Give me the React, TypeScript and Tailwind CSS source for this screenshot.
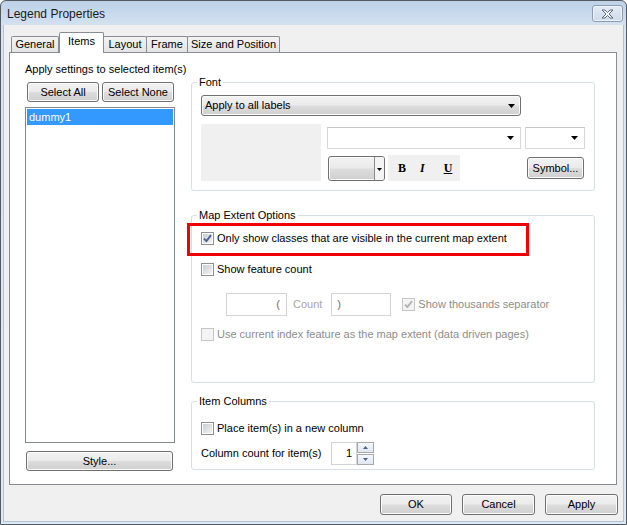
import type { ReactNode } from "react";

const btnBg =
  "bg-[linear-gradient(#f2f2f2_0%,#ebebeb_48%,#dddddd_52%,#cfcfcf_100%)] shadow-[inset_0_0_0_1px_#fbfbfb]";

function Button({ label, className }: { label: string; className: string }) {
  return (
    <div
      className={`flex shrink-0 items-center justify-center rounded-[3px] border border-[#707070] text-[11px] leading-[13px] text-black ${btnBg} ${className}`}
    >
      {label}
    </div>
  );
}

function Arrow({ color = "#000" }: { color?: string }) {
  return (
    <svg width="7" height="4" viewBox="0 0 7 4">
      <path d="M0 0 H7 L3.5 4 Z" fill={color} />
    </svg>
  );
}

function Check({ checked, disabled }: { checked?: boolean; disabled?: boolean }) {
  return (
    <span
      className={`flex h-[13px] w-[13px] shrink-0 items-center justify-center border ${
        disabled ? "border-[#c6c6c6] bg-[#f4f4f4]" : "border-[#8e8f8f] bg-white"
      }`}
    >
      <span
        className={`flex h-[9px] w-[9px] items-center justify-center ${
          disabled ? "bg-[#f4f4f4]" : "bg-[linear-gradient(135deg,#c9ccd1,#f3f3f3)]"
        }`}
      >
        {checked ? (
          <svg width="9" height="9" viewBox="0 0 9 9">
            <path
              d="M1 4.6 L3.4 7 L8 1.2"
              fill="none"
              stroke={disabled ? "#b3b3b3" : "#4a5f97"}
              strokeWidth="1.9"
            />
          </svg>
        ) : null}
      </span>
    </span>
  );
}

function Group({ title, className, children }: { title: string; className: string; children: ReactNode }) {
  return (
    <div className={`relative w-[404px] shrink-0 rounded-[3px] border border-[#d5dfe5] pl-[9px] ${className}`}>
      <span className="absolute -top-[7px] left-[5px] bg-white px-[2px] text-[11px] leading-[13px]">{title}</span>
      {children}
    </div>
  );
}

function Tab({ label, className }: { label: string; className: string }) {
  return (
    <div
      className={`flex shrink-0 items-center justify-center rounded-t-[2px] border border-b-0 border-[#898c95] text-[11px] leading-[13px] ${className}`}
    >
      {label}
    </div>
  );
}

export default function App() {
  return (
    <div className="h-[525px] w-[627px] bg-white font-['Liberation_Sans',Arial,sans-serif] text-black">
      <div className="flex h-[525px] w-[627px] flex-col overflow-hidden rounded-t-[6px] border border-[#555a60] bg-[linear-gradient(#bdd1e8,#d9e5f3_30px,#dde8f5)]">
        {/* title bar */}
        <div className="flex h-[24px] shrink-0 items-start justify-between pl-[6px] pr-[3px]">
          <span className="mt-[6px] text-[12px] leading-[14px] text-[#1b1b1b]">Legend Properties</span>
          <div className="mt-[4px] flex h-[17px] w-[31px] items-center justify-center rounded-[3px] border border-[#8c9db3] bg-[linear-gradient(#e3ebf5,#cfdbea)] shadow-[inset_0_0_0_1px_#eef3f9]">
            <svg width="13" height="10" viewBox="0 0 13 10">
              <path
                d="M1 1 H4 L6.5 3.5 L9 1 H12 L8 5 L12 9 H9 L6.5 6.5 L4 9 H1 L5 5 Z"
                fill="#f6f8fb"
                stroke="#4d5b6e"
                strokeWidth="0.9"
                strokeLinejoin="round"
              />
            </svg>
          </div>
        </div>

        {/* client area */}
        <div className="mx-[2px] mb-[2px] flex flex-1 flex-col border-x border-b border-[#b4c2d3] bg-[#f0f0f0] pl-[5px] pt-[7px]">
          {/* tabs */}
          <div className="relative z-10 flex h-[20px] items-end pl-[2px]">
            <Tab label="General" className="h-[16px] w-[48px] bg-[linear-gradient(#f3f3f3,#e4e4e4)]" />
            <Tab label="Items" className="-mb-[1px] h-[21px] w-[45px] bg-white pb-[3px]" />
            <Tab label="Layout" className="-ml-[1px] h-[16px] w-[44px] bg-[linear-gradient(#f3f3f3,#e4e4e4)]" />
            <Tab label="Frame" className="-ml-[1px] h-[16px] w-[42px] bg-[linear-gradient(#f3f3f3,#e4e4e4)]" />
            <Tab
              label="Size and Position"
              className="-ml-[1px] h-[16px] w-[93px] bg-[linear-gradient(#f3f3f3,#e4e4e4)]"
            />
          </div>

          {/* panel */}
          <div className="flex h-[433px] w-[608px] border border-[#898c95] bg-white pl-[15px] pt-[10px] text-[11px] leading-[13px]">
            {/* left column */}
            <div className="flex w-[150px] shrink-0 flex-col">
              <div className="h-[13px] whitespace-nowrap">Apply settings to selected item(s)</div>
              <div className="ml-[2px] mt-[6px] flex gap-[3px]">
                <Button label="Select All" className="h-[20px] w-[72px]" />
                <Button label="Select None" className="h-[20px] w-[72px]" />
              </div>
              <div className="mt-[5px] h-[336px] w-[150px] border border-[#828790] bg-white p-[1px]">
                <div className="flex h-[16px] items-center bg-[#3399ff] pl-[2px] text-white">dummy1</div>
              </div>
              <Button label="Style..." className="ml-[1px] mt-[8px] h-[20px] w-[147px]" />
            </div>

            {/* right column */}
            <div className="ml-[16px] flex flex-col">
              <Group title="Font" className="mt-[19px] h-[109px] pt-[12px]">
                <div className="flex h-[21px] w-[320px] items-center justify-between rounded-[3px] border border-[#707070] bg-[linear-gradient(#f2f2f2_0%,#ebebeb_48%,#dddddd_52%,#cfcfcf_100%)] pl-[3px] pr-[5px] shadow-[inset_0_0_0_1px_#fbfbfb]">
                  <span>Apply to all labels</span>
                  <Arrow />
                </div>
                <div className="mt-[8px] flex">
                  <div className="h-[57px] w-[120px] shrink-0 bg-[#f0f0f0]" />
                  <div className="ml-[6px] flex flex-col pt-[3px]">
                    <div className="flex">
                      <div className="flex h-[22px] w-[194px] items-center justify-end border border-[#d6d8dc] border-t-[#c4c7cc] bg-white pr-[6px]">
                        <Arrow />
                      </div>
                      <div className="ml-[4px] flex h-[22px] w-[60px] items-center justify-end border border-[#d6d8dc] border-t-[#c4c7cc] bg-white pr-[6px]">
                        <Arrow />
                      </div>
                    </div>
                    <div className="mt-[6px] flex h-[26px] items-center">
                      <div className="ml-[1px] flex h-[25px] w-[57px] overflow-hidden rounded-[3px] border border-[#707070] bg-[linear-gradient(#f2f2f2_0%,#ebebeb_48%,#dddddd_52%,#cfcfcf_100%)] shadow-[inset_0_0_0_1px_#fbfbfb]">
                        <div className="w-[46px] border-r border-[#8a8a8a]" />
                        <div className="flex flex-1 items-center justify-center bg-[#f4f4f4] pt-[2px]">
                          <svg width="5" height="3" viewBox="0 0 5 3">
                            <path d="M0 0 H5 L2.5 3 Z" fill="#000" />
                          </svg>
                        </div>
                      </div>
                      <div className="ml-[3px] flex h-[26px] w-[72px] items-center bg-[#f0f0f0] font-['Liberation_Serif','Times_New_Roman',serif] text-[12px] font-bold">
                        <span className="ml-[10px]">B</span>
                        <span className="ml-[14px] italic">I</span>
                        <span className="ml-[19px] underline">U</span>
                      </div>
                      <Button label="Symbol..." className="ml-[67px] h-[22px] w-[57px]" />
                    </div>
                  </div>
                </div>
              </Group>

              <Group title="Map Extent Options" className="mt-[24px] h-[168px] pt-[16px]">
                <div className="absolute left-[-5px] top-[7px] h-[33px] w-[342px] border-[3px] border-[#f00000]" />
                <div className="flex h-[13px] items-center gap-[3px]">
                  <Check checked />
                  <span className="whitespace-nowrap">Only show classes that are visible in the current map extent</span>
                </div>
                <div className="mt-[18px] flex h-[13px] items-center gap-[3px]">
                  <Check />
                  <span>Show feature count</span>
                </div>
                <div className="mt-[17px] flex h-[23px] items-center">
                  <div className="ml-[25px] flex h-[23px] w-[61px] items-center justify-end border border-[#d2d4d8] bg-white pr-[6px] text-[#6d6d6d]">
                    (
                  </div>
                  <span className="ml-[6px] text-[#a6a6a6]">Count</span>
                  <div className="ml-[9px] flex h-[23px] w-[60px] items-center border border-[#d2d4d8] bg-white pl-[5px] text-[#6d6d6d]">
                    )
                  </div>
                  <span className="ml-[11px]">
                    <Check checked disabled />
                  </span>
                  <span className="ml-[3px] text-[#8d8d8d]">Show thousands separator</span>
                </div>
                <div className="mt-[12px] flex h-[13px] items-center gap-[3px]">
                  <Check disabled />
                  <span className="whitespace-nowrap text-[#8d8d8d]">
                    Use current index feature as the map extent (data driven pages)
                  </span>
                </div>
              </Group>

              <Group title="Item Columns" className="mt-[18px] h-[69px] pt-[20px]">
                <div className="flex h-[13px] items-center gap-[3px]">
                  <Check />
                  <span>Place item(s) in a new column</span>
                </div>
                <div className="mt-[7px] flex h-[23px] items-center">
                  <span className="w-[130px] shrink-0">Column count for item(s)</span>
                  <div className="flex h-[23px] w-[26px] items-center justify-end border border-[#d2d4d8] bg-white pr-[4px]">
                    1
                  </div>
                  <div className="flex h-[23px] w-[17px] flex-col">
                    <div className="flex h-[11px] items-center justify-center border border-[#a8a8a8] bg-[linear-gradient(#f5f8fc,#dfe7f1)]">
                      <svg width="5" height="3" viewBox="0 0 5 3">
                        <path d="M0 3 H5 L2.5 0 Z" fill="#4c6187" />
                      </svg>
                    </div>
                    <div className="mt-[1px] flex h-[11px] items-center justify-center border border-[#a8a8a8] bg-[linear-gradient(#f5f8fc,#dfe7f1)]">
                      <svg width="5" height="3" viewBox="0 0 5 3">
                        <path d="M0 0 H5 L2.5 3 Z" fill="#4c6187" />
                      </svg>
                    </div>
                  </div>
                </div>
              </Group>
            </div>
          </div>

          {/* dialog buttons */}
          <div className="mt-[9px] flex justify-end pr-[5px]">
            <Button label="OK" className="h-[21px] w-[72px]" />
            <Button label="Cancel" className="ml-[10px] h-[21px] w-[73px]" />
            <Button label="Apply" className="ml-[10px] h-[21px] w-[73px]" />
          </div>
        </div>
      </div>
    </div>
  );
}
